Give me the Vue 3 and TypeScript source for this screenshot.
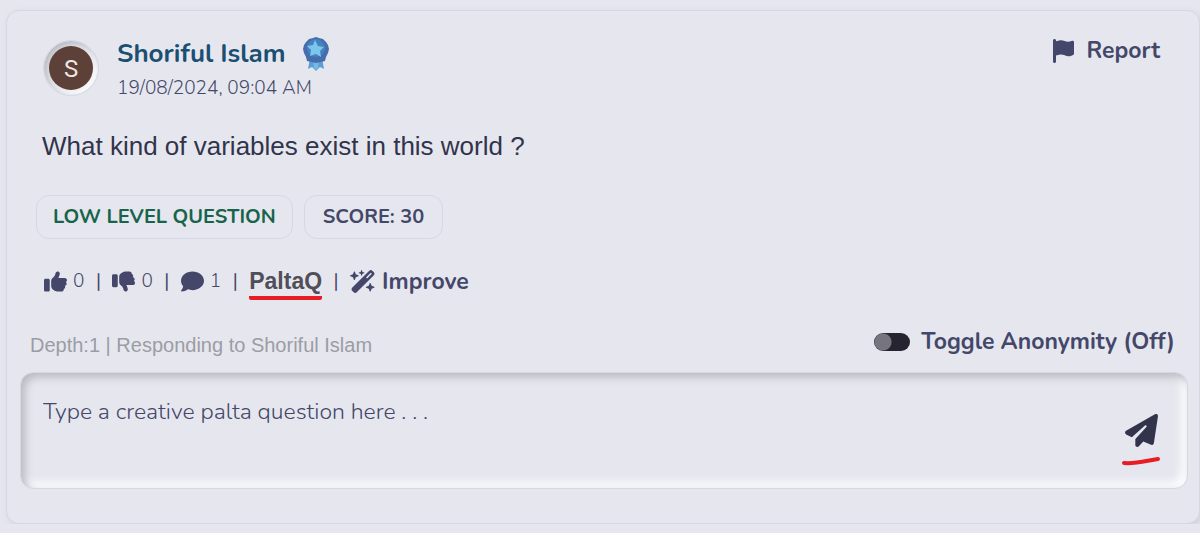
<script setup lang="ts">
import { ref } from 'vue'

const reply = ref('')
const anonymous = ref(false)

const icons = {
  flag: 'M64 32C64 14.3 49.7 0 32 0S0 14.3 0 32V64 368 480c0 17.7 14.3 32 32 32s32-14.3 32-32V352l64.3-16.1c41.1-10.3 84.6-5.5 122.5 13.4c44.2 22.1 95.5 24.8 141.7 7.4l34.7-13c12.5-4.7 20.8-16.6 20.8-30V66.1c0-23-24.2-38-44.8-27.7l-9.6 4.8c-46.3 23.2-100.8 23.2-147.1 0c-35.1-17.6-75.4-22-113.5-12.5L64 48V32z',
  up: 'M313.4 32.9c26 5.2 42.9 30.5 37.7 56.5l-2.3 11.4c-5.3 26.7-15.1 52.1-28.8 75.2H464c26.5 0 48 21.5 48 48c0 18.5-10.5 34.6-25.9 42.6C497 275.4 504 288.9 504 304c0 23.4-16.8 42.9-38.9 47.1c4.4 7.3 6.9 15.8 6.9 24.9c0 21.3-13.9 39.4-33.1 45.6c.7 3.3 1.1 6.8 1.1 10.4c0 26.5-21.5 48-48 48H294.5c-19 0-37.5-5.6-53.3-16.1l-38.5-25.7C176 420.4 160 390.4 160 358.3V320 272 247.1c0-29.2 13.3-56.7 36-75l7.4-5.9c26.5-21.2 44.6-51 51.2-84.2l2.3-11.4c5.2-26 30.5-42.9 56.5-37.7zM32 192H96c17.7 0 32 14.3 32 32V448c0 17.7-14.3 32-32 32H32c-17.7 0-32-14.3-32-32V224c0-17.7 14.3-32 32-32z',
  down: 'M313.4 479.1c26-5.2 42.9-30.5 37.7-56.5l-2.3-11.4c-5.3-26.7-15.1-52.1-28.8-75.2H464c26.5 0 48-21.5 48-48c0-18.5-10.5-34.6-25.9-42.6C497 236.6 504 223.1 504 208c0-23.4-16.8-42.9-38.9-47.1c4.4-7.3 6.9-15.8 6.9-24.9c0-21.3-13.9-39.4-33.1-45.6c.7-3.3 1.1-6.8 1.1-10.4c0-26.5-21.5-48-48-48H294.5c-19 0-37.5 5.6-53.3 16.1L202.7 73.8C176 91.6 160 121.6 160 153.7V192v48 24.9c0 29.2 13.3 56.7 36 75l7.4 5.9c26.5 21.2 44.6 51 51.2 84.2l2.3 11.4c5.2 26 30.5 42.9 56.5 37.7zM32 384H96c17.7 0 32-14.3 32-32V128c0-17.7-14.3-32-32-32H32C14.3 96 0 110.3 0 128V352c0 17.7 14.3 32 32 32z',
  comment: 'M512 240c0 114.9-114.6 208-256 208c-37.1 0-72.3-6.4-104.1-17.9c-11.9 8.7-31.3 20.6-54.3 30.6C73.6 471.1 44.7 480 16 480c-6.5 0-12.3-3.9-14.8-9.9c-2.5-6-1.1-12.8 3.4-17.4l.3-.3c.3-.3 .7-.7 1.3-1.4c1.1-1.2 2.8-3.1 4.9-5.7c4.1-5 9.6-12.4 15.2-21.6c10-16.6 19.5-38.4 21.4-62.9C17.7 326.8 0 285.1 0 240C0 125.1 114.6 32 256 32s256 93.1 256 208z',
  wand: 'M234.7 42.7L197 56.8c-3 1.1-5 4-5 7.2s2 6.1 5 7.2l37.7 14.1L248.8 123c1.1 3 4 5 7.2 5s6.1-2 7.2-5l14.1-37.7L315 71.2c3-1.1 5-4 5-7.2s-2-6.1-5-7.2L277.3 42.7 263.2 5c-1.1-3-4-5-7.2-5s-6.1 2-7.2 5L234.7 42.7zM46.1 395.4c-18.7 18.7-18.7 49.1 0 67.9l34.6 34.6c18.7 18.7 49.1 18.7 67.9 0L529.9 116.5c18.7-18.7 18.7-49.1 0-67.9L495.3 14.1c-18.7-18.7-49.1-18.7-67.9 0L46.1 395.4zM484.6 82.6l-105 105-23.3-23.3 105-105 23.3 23.3zM7.5 117.2C3 118.9 0 123.2 0 128s3 9.1 7.5 10.8L64 160l21.2 56.5c1.7 4.5 6 7.5 10.8 7.5s9.1-3 10.8-7.5L128 160l56.5-21.2c4.5-1.7 7.5-6 7.5-10.8s-3-9.1-7.5-10.8L128 96 106.8 39.5C105.1 35 100.8 32 96 32s-9.1 3-10.8 7.5L64 96 7.5 117.2zm352 256c-4.5 1.7-7.5 6-7.5 10.8s3 9.1 7.5 10.8L416 416l21.2 56.5c1.7 4.5 6 7.5 10.8 7.5s9.1-3 10.8-7.5L480 416l56.5-21.2c4.5-1.7 7.5-6 7.5-10.8s-3-9.1-7.5-10.8L480 352l-21.2-56.5c-1.7-4.5-6-7.5-10.8-7.5s-9.1 3-10.8 7.5L416 352l-56.5 21.2z',
  plane: 'M498.1 5.6c10.1 7 15.4 19.1 13.5 31.2l-64 416c-1.5 9.7-7.4 18.2-16 23s-18.9 5.4-28 1.6L284 427.7l-68.5 74.1c-8.9 9.7-22.9 12.9-35.2 8.1S160 493.2 160 480V396.4c0-4 1.5-7.8 4.2-10.7L331.8 202.8c5.8-6.3 5.6-16-.4-22s-15.7-6.4-22-.7L106 360.8 17.7 316.6C7.1 311.3 .3 300.7 0 288.9s5.9-22.8 16.1-28.7l448-256c10.7-6.1 23.9-5.5 34 1.4z',
}

const votes = [
  { label: 'Like', icon: icons.up, count: 0 },
  { label: 'Dislike', icon: icons.down, count: 0 },
  { label: 'Comments', icon: icons.comment, count: 1 },
]
</script>

<template>
  <article class="card">
    <header class="head">
      <div class="avatar"><span class="initial">S</span></div>
      <div class="who">
        <div class="name-row">
          <a class="name" href="#">Shoriful Islam</a>
          <svg class="medal" viewBox="0 0 28 34" aria-hidden="true">
            <path d="M8 21 L6 32 L10 30 L14 34 L18 30 L22 32 L20 21Z" fill="#5d9fd2" />
            <path d="M11 23 L12 31 L14 33 L16 31 L17 23Z" fill="#74b9e4" />
            <path d="M14 0l3 1 4 1 3 3 2 3 1 4-1 4-2 4-1 4-4 1-5 1-5-1-4-1-1-4-2-4-1-4 1-4 2-3 3-3 4-1z" fill="#466eae" />
            <circle cx="14" cy="11" r="9" fill="#4583bf" />
            <path d="M13 3l3 6 6 1-4 4 1 6-5-3-6 2 1-6-4-4 6-1z" fill="#7cc5ed" />
          </svg>
        </div>
        <time class="date" datetime="2024-08-19T09:04">19/08/2024, 09:04 AM</time>
      </div>
      <button class="plain report" type="button">
        <svg class="flag" viewBox="0 0 448 512" aria-hidden="true"><path :d="icons.flag" /></svg>
        Report
      </button>
    </header>

    <p class="question">What kind of variables exist in this world ?</p>

    <div class="pills">
      <span class="pill level">LOW LEVEL QUESTION</span>
      <span class="pill score">SCORE: 30</span>
    </div>

    <div class="actions">
      <template v-for="vote in votes" :key="vote.label">
        <button class="plain vote" type="button" :aria-label="vote.label">
          <svg class="icon" viewBox="0 0 512 512" aria-hidden="true"><path :d="vote.icon" /></svg>
          <span>{{ vote.count }}</span>
        </button>
        <span class="bar">|</span>
      </template>
      <button class="plain palta" type="button">PaltaQ</button>
      <span class="bar">|</span>
      <button class="plain improve" type="button">
        <svg class="wand" viewBox="0 0 576 512" aria-hidden="true"><path :d="icons.wand" /></svg>
        Improve
      </button>
    </div>

    <div class="reply-head">
      <label class="depth" for="reply">Depth:1 | Responding to Shoriful Islam</label>
      <label class="anon">
        <input v-model="anonymous" class="switch" type="checkbox" role="switch" />
        Toggle Anonymity ({{ anonymous ? 'On' : 'Off' }})
      </label>
    </div>

    <div class="composer">
      <textarea id="reply" v-model="reply" class="field" placeholder="Type a creative palta question here . . ."></textarea>
      <button class="plain send" type="button" aria-label="Send">
        <svg class="plane" viewBox="0 0 512 512" aria-hidden="true"><path :d="icons.plane" /></svg>
        <svg class="stroke" viewBox="0 0 40 10" aria-hidden="true"><path d="M3 7 C15 8 24 5 37 3" /></svg>
      </button>
    </div>
  </article>
</template>

<style>
body {
  background: #e6e7ee;
}
</style>

<style scoped>
.card {
  box-sizing: border-box;
  margin: 10px 0 0 6px;
  padding: 24px 11px 34px 13px;
  border: 1px solid #d1d9e6;
  border-radius: 13px;
  background: #e6e7ee;
  box-shadow: 3px 3px 8px #cfd1d9;
  color: #44476a;
  font-family: Nunito, "Open Sans", sans-serif;
  font-size: 23px;
}
svg {
  display: block;
  flex: none;
  fill: currentColor;
}
.plain {
  display: flex;
  align-items: center;
  padding: 0;
  border: 0;
  background: none;
  color: inherit;
  font: inherit;
  cursor: pointer;
}
.head {
  display: flex;
  align-items: flex-start;
  padding: 0 28px 0 23px;
}
.avatar {
  display: flex;
  box-sizing: border-box;
  width: 56px;
  height: 56px;
  margin-top: 5px;
  border: 1px solid #d1d9e6;
  border-radius: 50%;
  box-shadow: inset 3px 3px 6px #b8b9be, inset -3px -3px 6px #fff;
}
.initial {
  width: 44px;
  height: 44px;
  margin: auto;
  border-radius: 50%;
  background: #5d4037;
  color: #eee6e2;
  font: 24px/46px Roboto, sans-serif;
  text-align: center;
}
.who {
  flex: 1;
  margin-left: 18px;
}
.name-row {
  display: flex;
  align-items: center;
  gap: 16px;
  height: 37px;
}
.name {
  color: #1b4f72;
  font-size: 26px;
  font-weight: 700;
  line-height: 37px;
  text-decoration: none;
}
.medal {
  width: 28px;
  height: 34px;
}
.date {
  display: block;
  font-size: 19px;
  font-weight: 300;
  line-height: 32px;
}
.report {
  gap: 13px;
  height: 31px;
  font-weight: 700;
}
.flag {
  width: 21px;
  height: 24px;
}
.question {
  margin: 24px 22px 0;
  color: #31344b;
  font: 26px/36px "Liberation Sans", Arial, sans-serif;
}
.pills {
  display: flex;
  gap: 11px;
  margin: 31px 16px 0;
}
.pill {
  padding: 0 16px;
  border: 1px solid #d1d9e6;
  border-radius: 13px;
  font-size: 20px;
  font-weight: 700;
  line-height: 42px;
}
.level {
  color: #18634b;
}
.score {
  padding: 0 18px;
}
.actions {
  display: flex;
  align-items: center;
  height: 36px;
  margin: 24px 24px 0;
}
.vote {
  gap: 6px;
  font-size: 19px;
  font-weight: 300;
}
.icon {
  width: 23px;
  height: 23px;
}
.bar {
  width: 28px;
  font-size: 19px;
  font-weight: 400;
  text-align: center;
}
.palta {
  margin-top: 4px;
  border-bottom: 4px solid #e81c23;
  border-radius: 2px;
  color: #504f59;
  font: 700 23px/30px "Liberation Sans", Arial, sans-serif;
}
.improve {
  gap: 6px;
  font-weight: 700;
}
.wand {
  width: 26px;
  height: 23px;
}
.reply-head {
  display: flex;
  align-items: flex-start;
  justify-content: space-between;
  height: 36px;
  margin: 27px 13px 0 10px;
}
.depth {
  color: #9c9ca5;
  font: 20px/38px "Liberation Sans", Arial, sans-serif;
}
.anon {
  display: flex;
  align-items: center;
  gap: 11px;
  font-weight: 700;
  line-height: 32px;
}
.switch {
  width: 36px;
  height: 18px;
  margin: 0;
  border-radius: 9px;
  background: radial-gradient(circle at 9px 9px, #75747f 8px, transparent 9px) #262430;
  appearance: none;
}
.switch:checked {
  background: radial-gradient(circle at 27px 9px, #e6e7ee 8px, transparent 9px) #262430;
}
.composer {
  display: flex;
  align-items: center;
  padding: 0 26px 0 22px;
  border: 1px solid #d1d9e6;
  border-radius: 13px;
  margin-top: 10px;
  box-shadow: inset 4px 4px 8px #b8b9be, inset -5px -5px 10px #fff;
}
.field {
  flex: 1;
  box-sizing: border-box;
  height: 115px;
  padding: 22px 0;
  border: 0;
  outline: 0;
  background: none;
  color: #44476a;
  font: 300 23px/34px Nunito, "Open Sans", sans-serif;
  resize: none;
}
.field::placeholder {
  color: #44476a;
  opacity: 1;
}
.send {
  flex-direction: column;
  gap: 9px;
  margin-top: 18px;
  color: #31344b;
}
.plane {
  width: 33px;
  height: 33px;
}
.stroke {
  width: 40px;
  height: 10px;
  fill: none;
  stroke: #e81c23;
  stroke-width: 4;
  stroke-linecap: round;
}
</style>
